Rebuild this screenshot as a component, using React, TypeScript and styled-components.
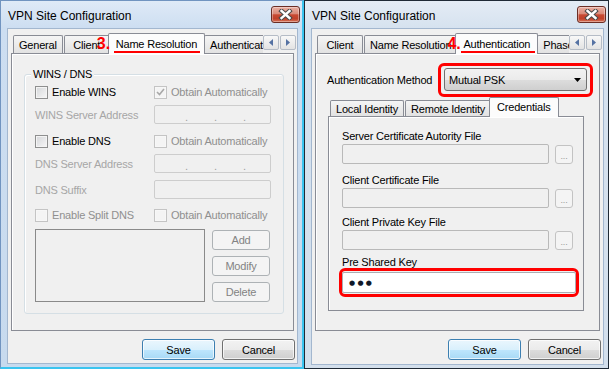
import React from 'react'
import styled, { createGlobalStyle } from 'styled-components'

const GlobalStyle = createGlobalStyle`
  html, body {
    margin: 0;
    padding: 0;
    background: #ffffff;
  }
  body {
    font-family: 'Liberation Sans', Arial, sans-serif;
    font-size: 11px;
    letter-spacing: -0.2px;
    color: #000000;
  }
  * {
    box-sizing: border-box;
  }
`

const Desktop = styled.div`
  display: flex;
  width: 612px;
  height: 369px;
  overflow: hidden;
`

const Frame = styled.div<{ $active?: boolean; $width: number }>`
  display: flex;
  flex: none;
  flex-direction: column;
  width: ${({ $width }) => $width}px;
  height: 369px;
  padding: 0 4px 3px 6px;
  border: 1px solid ${({ $active }) => ($active ? '#7194c0' : '#1f2a36')};
  border-right: ${({ $active }) => ($active ? '2px solid #3ac4ef' : '1px solid #1f2a36')};
  border-bottom: ${({ $active }) => ($active ? '2px solid #3ac4ef' : '1px solid #1f2a36')};
  background: ${({ $active }) =>
    $active
      ? 'linear-gradient(#dfeaf7, #cddef1 27px, #c7daee)'
      : 'linear-gradient(#e4ecf5, #d6e2ef 27px, #d3dfec)'};
`

const TitleBar = styled.div`
  display: flex;
  flex: none;
  align-items: center;
  justify-content: space-between;
  height: 27px;
`

const Title = styled.span`
  margin-left: 1px;
  padding-top: 2px;
  font-size: 12px;
  letter-spacing: 0;
`

const CloseButton = styled.span`
  display: flex;
  align-items: center;
  justify-content: center;
  width: 29px;
  height: 17px;
  margin-right: -2px;
  border: 1px solid #6b2e25;
  border-radius: 3px;
  background: linear-gradient(#eab0a3 0%, #da8a79 45%, #c84a33 52%, #c0412a 78%, #d7755b 100%);
  box-shadow: inset 0 0 0 1px rgba(255, 255, 255, 0.35);
`

const Body = styled.div`
  display: flex;
  flex: 1;
  flex-direction: column;
  padding: 4px 2px 0 3px;
  border: 1px solid #a3b7cf;
  background: #f0f0f0;
`

const TabRow = styled.div<{ $height: number }>`
  position: relative;
  z-index: 1;
  display: flex;
  flex: none;
  height: ${({ $height }) => $height}px;
  margin-bottom: -1px;
  padding-left: 2px;
`

const TabList = styled.div`
  display: flex;
  flex: 1;
  min-width: 0;
  overflow: hidden;
`

const Tab = styled.div<{ $selected?: boolean; $drop: number }>`
  position: relative;
  z-index: ${({ $selected }) => ($selected ? 2 : 1)};
  display: flex;
  flex: none;
  align-items: center;
  justify-content: center;
  min-width: 46px;
  padding: ${({ $selected }) => ($selected ? '0 7px 1px' : '0 5px')};
  margin: ${({ $selected, $drop }) => ($selected ? '0 -1px 0 -3px' : `${$drop}px 1px 1px 0`)};
  border: 1px solid #898c95;
  border-bottom: none;
  border-radius: 2px 2px 0 0;
  background: ${({ $selected }) => ($selected ? '#fcfcfc' : 'linear-gradient(#f5f5f5, #e2e2e2)')};
  white-space: nowrap;
`

const StepNumber = styled.span<{ $left: number }>`
  position: absolute;
  top: 2px;
  left: ${({ $left }) => $left}px;
  font-size: 16px;
  font-weight: bold;
  line-height: 1;
  letter-spacing: 0;
  color: #ff0000;
`

const StepUnderline = styled.span<{ $left: number; $right: number }>`
  position: absolute;
  right: ${({ $right }) => $right}px;
  bottom: 1px;
  left: ${({ $left }) => $left}px;
  height: 2px;
  background: #ff0000;
`

const ScrollArrows = styled.div`
  display: flex;
  flex: none;
  gap: 1px;
  margin: 2px -1px 0 0;
  height: 15px;
`

const ArrowButton = styled.span`
  display: flex;
  align-items: center;
  justify-content: center;
  width: 16px;
  height: 15px;
  border: 1px solid #b5bcc6;
  border-radius: 2px;
  background: linear-gradient(#f8f8f8, #e3e3e3);
`

const Panel = styled.div<{ $height: number; $padding: string }>`
  display: flex;
  flex: none;
  flex-direction: column;
  height: ${({ $height }) => $height}px;
  margin-right: 1px;
  padding: ${({ $padding }) => $padding};
  border: 1px solid #898c95;
  background: #f0f0f0;
  box-shadow: inset 1px 1px 0 #ffffff;
`

const Group = styled.div`
  position: relative;
  display: flex;
  flex-direction: column;
  width: 260px;
  height: 240px;
  padding: 7px 11px 0 10px;
  border: 1px solid #d5dfe5;
  border-radius: 3px;
  box-shadow: inset 1px 1px 0 #ffffff;
`

const GroupLegend = styled.span`
  position: absolute;
  top: -7px;
  left: 6px;
  padding: 0 2px;
  line-height: 13px;
  background: #f0f0f0;
`

const FormRow = styled.div<{ $height: number; $gap: number }>`
  display: grid;
  grid-template-columns: 119px 117px;
  align-items: center;
  height: ${({ $height }) => $height}px;
  margin-top: ${({ $gap }) => $gap}px;
`

const CheckLabel = styled.span<{ $disabled?: boolean }>`
  display: flex;
  align-items: center;
  gap: 4px;
  color: ${({ $disabled }) => ($disabled ? '#8f8f8f' : '#000000')};
  white-space: nowrap;
`

const CheckBox = styled.span<{ $disabled?: boolean }>`
  display: flex;
  align-items: center;
  justify-content: center;
  width: 13px;
  height: 13px;
  border: 1px solid ${({ $disabled }) => ($disabled ? '#c4c4c4' : '#8e8f8f')};
  background: ${({ $disabled }) =>
    $disabled ? '#f4f4f4' : 'linear-gradient(135deg, #d4d6d9, #f7f7f7)'};
  box-shadow: inset 0 0 0 1px ${({ $disabled }) => ($disabled ? '#f7f7f7' : '#f4f4f4')};
`

const StaticLabel = styled.span<{ $disabled?: boolean }>`
  color: ${({ $disabled }) => ($disabled ? '#a6a6a6' : '#000000')};
  white-space: nowrap;
`

const DisabledField = styled.div`
  display: flex;
  align-items: center;
  height: 19px;
  border: 1px solid #cdcdcd;
  border-radius: 2px;
  background: #f0f0f0;
`

const IpSegment = styled.span<{ $width?: number }>`
  width: ${({ $width }) => $width ?? 27}px;
  flex: none;
`

const IpDot = styled.span`
  width: 2px;
  flex: none;
  padding-top: 5px;
  color: #a0a0a0;
  line-height: 1;
`

const ListRow = styled.div`
  display: grid;
  grid-template-columns: 170px 58px;
  column-gap: 7px;
  height: 73px;
  margin-top: 4px;
`

const ListBox = styled.div`
  border: 1px solid #8a8a8a;
  background: #f0f0f0;
`

const ButtonStack = styled.div`
  display: flex;
  flex-direction: column;
  gap: 6px;
  padding-top: 1px;
`

const DisabledButton = styled.span`
  display: flex;
  align-items: center;
  justify-content: center;
  height: 20px;
  border: 1px solid #adb2b5;
  border-radius: 3px;
  background: #f4f4f4;
  color: #838383;
`

const MethodRow = styled.div`
  display: flex;
  align-items: center;
  height: 34px;
`

const MethodLabel = styled.span`
  width: 111px;
  flex: none;
  white-space: nowrap;
`

const Highlight = styled.div<{ $padding: string; $width?: number; $shift?: number }>`
  width: ${({ $width }) => ($width ? `${$width}px` : 'auto')};
  margin-left: ${({ $shift }) => $shift ?? 0}px;
  padding: ${({ $padding }) => $padding};
  border: 3px solid #ff0000;
  border-radius: 6px;
`

const ComboBox = styled.div`
  display: flex;
  align-items: center;
  justify-content: space-between;
  width: 143px;
  height: 23px;
  padding: 0 5px 0 4px;
  border: 1px solid #707070;
  border-radius: 3px;
  background: linear-gradient(#f2f2f2 0%, #ebebeb 50%, #dddddd 51%, #cfcfcf 100%);
`

const InnerTabs = styled.div`
  display: flex;
  flex-direction: column;
  width: 257px;
  margin-left: 1px;
`

const FileLabel = styled.span<{ $gap: number }>`
  display: block;
  margin-top: ${({ $gap }) => $gap}px;
  line-height: 12px;
  white-space: nowrap;
`

const FileRow = styled.div`
  display: flex;
  align-items: center;
  gap: 6px;
  margin-top: 2px;
`

const FileField = styled.div`
  width: 207px;
  height: 20px;
  border: 1px solid #b9b9b9;
  border-radius: 2px;
  background: #f0f0f0;
`

const BrowseButton = styled.span`
  display: flex;
  align-items: flex-end;
  justify-content: center;
  width: 18px;
  height: 19px;
  padding-bottom: 2px;
  border: 1px solid #c3c3c3;
  border-radius: 3px;
  background: #f4f4f4;
  color: #9a9a9a;
  font-size: 9px;
  line-height: 1;
`

const KeyField = styled.div`
  display: flex;
  align-items: center;
  width: 234px;
  height: 21px;
  padding-left: 6px;
  border: 1px solid #abadb3;
  border-radius: 2px;
  background: #ffffff;
  font-family: 'DejaVu Sans', sans-serif;
  font-size: 7px;
  letter-spacing: 2.3px;
  color: #101828;
`

const Footer = styled.div`
  display: flex;
  justify-content: flex-end;
  gap: 7px;
  margin-top: 8px;
`

const DialogButton = styled.span<{ $default?: boolean }>`
  display: flex;
  align-items: center;
  justify-content: center;
  width: 73px;
  height: 21px;
  border: 1px solid ${({ $default }) => ($default ? '#3c7fb1' : '#707070')};
  border-radius: 3px;
  background: ${({ $default }) =>
    $default
      ? 'linear-gradient(#eaf6fd 0%, #d9f0fc 50%, #bee6fd 51%, #a7d9f5 100%)'
      : 'linear-gradient(#f2f2f2 0%, #ebebeb 50%, #dddddd 51%, #cfcfcf 100%)'};
  box-shadow: inset 0 0 0 1px rgba(255, 255, 255, 0.7);
`

const CloseGlyph = () => (
  <svg width="15" height="11" viewBox="0 0 15 11">
    <path d="M3.5 2 L11.5 9 M11.5 2 L3.5 9" stroke="#4a4a4a" strokeWidth="4.4" strokeLinecap="square" />
    <path d="M3.5 2 L11.5 9 M11.5 2 L3.5 9" stroke="#ffffff" strokeWidth="2.4" strokeLinecap="square" />
  </svg>
)

const Arrow: React.FC<{ dir: 'left' | 'right' }> = ({ dir }) => (
  <svg width="4" height="7" viewBox="0 0 4 7">
    <polygon points={dir === 'left' ? '4,0 0,3.5 4,7' : '0,0 4,3.5 0,7'} fill="#5572a3" />
  </svg>
)

const TabScroller = () => (
  <ScrollArrows>
    <ArrowButton>
      <Arrow dir="left" />
    </ArrowButton>
    <ArrowButton>
      <Arrow dir="right" />
    </ArrowButton>
  </ScrollArrows>
)

interface WindowProps {
  active?: boolean
  width: number
  children: React.ReactNode
}

const Window: React.FC<WindowProps> = ({ active, width, children }) => (
  <Frame $active={active} $width={width}>
    <TitleBar>
      <Title>VPN Site Configuration</Title>
      <CloseButton>
        <CloseGlyph />
      </CloseButton>
    </TitleBar>
    <Body>
      {children}
      <Footer>
        <DialogButton $default>Save</DialogButton>
        <DialogButton>Cancel</DialogButton>
      </Footer>
    </Body>
  </Frame>
)

const Check: React.FC<{ label: string; disabled?: boolean; checked?: boolean }> = ({
  label,
  disabled,
  checked,
}) => (
  <CheckLabel $disabled={disabled}>
    <CheckBox $disabled={disabled}>
      {checked && (
        <svg width="9" height="8" viewBox="0 0 9 8">
          <path d="M1 4 L3.5 6.5 L8 1" fill="none" stroke="#a8a8a8" strokeWidth="1.6" />
        </svg>
      )}
    </CheckBox>
    {label}
  </CheckLabel>
)

const IpField = () => (
  <DisabledField>
    <IpSegment $width={3} />
    <IpSegment />
    <IpDot>.</IpDot>
    <IpSegment />
    <IpDot>.</IpDot>
    <IpSegment />
    <IpDot>.</IpDot>
  </DisabledField>
)

const NameResolutionWindow = () => (
  <Window active width={304}>
    <TabRow $height={21}>
      <TabList>
        <Tab $drop={2}>General</Tab>
        <Tab $drop={2}>Client</Tab>
        <Tab $selected $drop={2}>
          <StepNumber $left={-12}>3.</StepNumber>
          Name Resolution
          <StepUnderline $left={5} $right={4} />
        </Tab>
        <Tab $drop={2}>Authentication</Tab>
        <Tab $drop={2}>Phase 1</Tab>
      </TabList>
      <TabScroller />
    </TabRow>
    <Panel $height={278} $padding="20px 0 0 12px">
      <Group>
        <GroupLegend>WINS / DNS</GroupLegend>
        <FormRow $height={20} $gap={0}>
          <Check label="Enable WINS" />
          <Check label="Obtain Automatically" disabled checked />
        </FormRow>
        <FormRow $height={19} $gap={3}>
          <StaticLabel $disabled>WINS Server Address</StaticLabel>
          <IpField />
        </FormRow>
        <FormRow $height={20} $gap={7}>
          <Check label="Enable DNS" />
          <Check label="Obtain Automatically" disabled />
        </FormRow>
        <FormRow $height={19} $gap={3}>
          <StaticLabel $disabled>DNS Server Address</StaticLabel>
          <IpField />
        </FormRow>
        <FormRow $height={19} $gap={7}>
          <StaticLabel $disabled>DNS Suffix</StaticLabel>
          <DisabledField />
        </FormRow>
        <FormRow $height={20} $gap={6}>
          <Check label="Enable Split DNS" disabled />
          <Check label="Obtain Automatically" disabled />
        </FormRow>
        <ListRow>
          <ListBox />
          <ButtonStack>
            <DisabledButton>Add</DisabledButton>
            <DisabledButton>Modify</DisabledButton>
            <DisabledButton>Delete</DisabledButton>
          </ButtonStack>
        </ListRow>
      </Group>
    </Panel>
  </Window>
)

const FileSelect: React.FC<{ label: string; gap: number }> = ({ label, gap }) => (
  <>
    <FileLabel $gap={gap}>{label}</FileLabel>
    <FileRow>
      <FileField />
      <BrowseButton>...</BrowseButton>
    </FileRow>
  </>
)

const AuthenticationWindow = () => (
  <Window width={305}>
    <TabRow $height={21}>
      <TabList>
        <Tab $drop={2}>Client</Tab>
        <Tab $drop={2}>Name Resolution</Tab>
        <Tab $selected $drop={2}>
          <StepNumber $left={-9}>4.</StepNumber>
          Authentication
          <StepUnderline $left={5} $right={2} />
        </Tab>
        <Tab $drop={2}>Phase 1</Tab>
        <Tab $drop={2}>Phase 2</Tab>
      </TabList>
      <TabScroller />
    </TabRow>
    <Panel $height={278} $padding="9px 0 0 11px">
      <MethodRow>
        <MethodLabel>Authentication Method</MethodLabel>
        <Highlight $padding="2px 3px 3px">
          <ComboBox>
            Mutual PSK
            <svg width="7" height="4" viewBox="0 0 7 4">
              <polygon points="0,0 7,0 3.5,4" fill="#000000" />
            </svg>
          </ComboBox>
        </Highlight>
      </MethodRow>
      <InnerTabs>
        <TabRow $height={20}>
          <TabList>
            <Tab $drop={3}>Local Identity</Tab>
            <Tab $drop={3}>Remote Identity</Tab>
            <Tab $selected $drop={3}>
              Credentials
            </Tab>
          </TabList>
        </TabRow>
        <Panel $height={195} $padding="13px 0 0 13px">
          <FileSelect label="Server Certificate Autority File" gap={0} />
          <FileSelect label="Client Certificate File" gap={10} />
          <FileSelect label="Client Private Key File" gap={8} />
          <FileLabel $gap={6}>Pre Shared Key</FileLabel>
          <Highlight $padding="1px 0" $width={240} $shift={-3}>
            <KeyField>●●●</KeyField>
          </Highlight>
        </Panel>
      </InnerTabs>
    </Panel>
  </Window>
)

export default function App() {
  return (
    <>
      <GlobalStyle />
      <Desktop>
        <NameResolutionWindow />
        <AuthenticationWindow />
      </Desktop>
    </>
  )
}
